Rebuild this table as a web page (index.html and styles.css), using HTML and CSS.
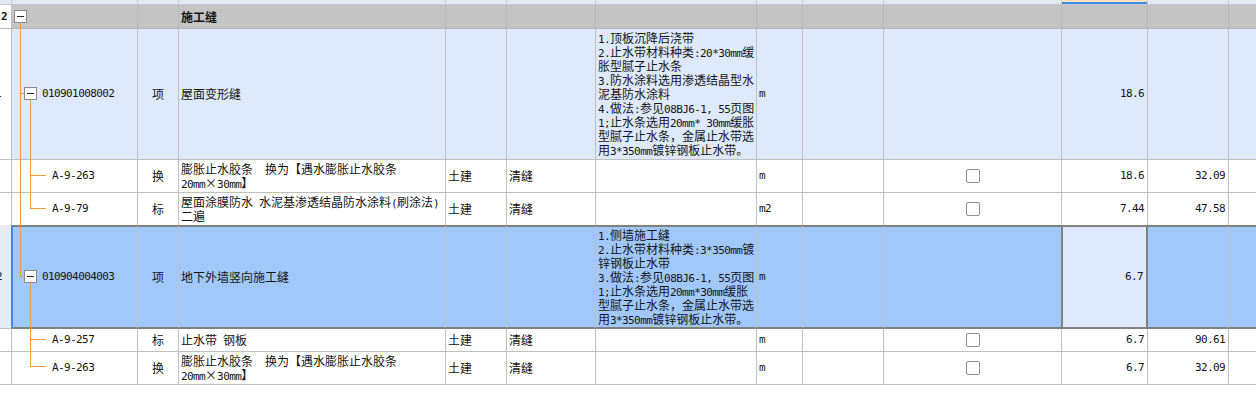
FILE: index.html
```html
<!DOCTYPE html>
<html lang="zh-CN">
<head>
<meta charset="utf-8">
<title>清单</title>
<link rel="stylesheet" href="styles.css">
</head>
<body>
<div class="sheet">
  <div class="row hdr">
    <div class="c c0"></div><div class="c"></div><div class="c"></div><div class="c"></div><div class="c"></div><div class="c"></div><div class="c"></div><div class="c"></div><div class="c"></div><div class="c"></div><div class="c cur"></div><div class="c"></div><div class="c"></div>
  </div>

  <div class="row grp">
    <div class="c c0"><b class="n bold">2</b></div>
    <div class="c"></div>
    <div class="c"></div>
    <div class="c name"><b>施工缝</b></div>
    <div class="c"></div><div class="c"></div><div class="c"></div><div class="c"></div><div class="c"></div><div class="c"></div><div class="c"></div><div class="c"></div><div class="c"></div>
  </div>

  <div class="row item r1">
    <div class="c c0"><span class="n clip">1</span></div>
    <div class="c code item-code"><span class="n">010901008002</span></div>
    <div class="c mid">项</div>
    <div class="c name">屋面变形缝</div>
    <div class="c"></div>
    <div class="c"></div>
    <div class="c desc"><div>
      <div><span class="n">1.</span>顶板沉降后浇带</div>
      <div><span class="n">2.</span>止水带材料种类<span class="n">:20*30mm</span>缓</div>
      <div>胀型腻子止水条</div>
      <div><span class="n">3.</span>防水涂料选用渗透结晶型水</div>
      <div>泥基防水涂料</div>
      <div><span class="n">4.</span>做法<span class="n">:</span>参见<span class="n">08BJ6-1, 55</span>页图</div>
      <div><span class="n">1;</span>止水条选用<span class="n">20mm* 30mm</span>缓胀</div>
      <div>型腻子止水条，金属止水带选</div>
      <div>用<span class="n">3*350mm</span>镀锌钢板止水带。</div>
    </div></div>
    <div class="c unit"><span class="n">m</span></div>
    <div class="c"></div>
    <div class="c"></div>
    <div class="c num"><span class="n">18.6</span></div>
    <div class="c"></div>
    <div class="c"></div>
  </div>

  <div class="row sub r2">
    <div class="c c0"></div>
    <div class="c code sub-code"><span class="n">A-9-263</span></div>
    <div class="c mid">换</div>
    <div class="c name"><div>膨胀止水胶条　换为【遇水膨胀止水胶条<br><span class="n">20mm</span>×<span class="n">30mm</span>】</div></div>
    <div class="c">土建</div>
    <div class="c">清缝</div>
    <div class="c desc"></div>
    <div class="c unit"><span class="n">m</span></div>
    <div class="c"></div>
    <div class="c chk"><span class="box"></span></div>
    <div class="c num"><span class="n">18.6</span></div>
    <div class="c num"><span class="n">32.09</span></div>
    <div class="c"></div>
  </div>

  <div class="row sub r3">
    <div class="c c0"></div>
    <div class="c code sub-code"><span class="n">A-9-79</span></div>
    <div class="c mid">标</div>
    <div class="c name"><div>屋面涂膜防水<span class="n">&nbsp;</span>水泥基渗透结晶防水涂料<span class="n">(</span>刷涂法<span class="n">)</span><br>二遍</div></div>
    <div class="c">土建</div>
    <div class="c">清缝</div>
    <div class="c desc"></div>
    <div class="c unit"><span class="n">m2</span></div>
    <div class="c"></div>
    <div class="c chk"><span class="box"></span></div>
    <div class="c num"><span class="n">7.44</span></div>
    <div class="c num"><span class="n">47.58</span></div>
    <div class="c"></div>
  </div>

  <div class="row sel">
    <div class="c c0"><span class="n clip2">2</span></div>
    <div class="c code item-code first"><span class="n">010904004003</span></div>
    <div class="c mid">项</div>
    <div class="c name">地下外墙竖向施工缝</div>
    <div class="c"></div>
    <div class="c"></div>
    <div class="c desc"><div>
      <div><span class="n">1.</span>侧墙施工缝</div>
      <div><span class="n">2.</span>止水带材料种类<span class="n">:3*350mm</span>镀</div>
      <div>锌钢板止水带</div>
      <div><span class="n">3.</span>做法<span class="n">:</span>参见<span class="n">08BJ6-1, 55</span>页图</div>
      <div><span class="n">1;</span>止水条选用<span class="n">20mm*30mm</span>缓胀</div>
      <div>型腻子止水条，金属止水带选</div>
      <div>用<span class="n">3*350mm</span>镀锌钢板止水带。</div>
    </div></div>
    <div class="c unit"><span class="n">m</span></div>
    <div class="c"></div>
    <div class="c before-cur"></div>
    <div class="c num cur-cell"><span class="n">6.7</span></div>
    <div class="c"></div>
    <div class="c"></div>
  </div>

  <div class="row sub r5">
    <div class="c c0"></div>
    <div class="c code sub-code"><span class="n">A-9-257</span></div>
    <div class="c mid">标</div>
    <div class="c name"><div>止水带<span class="n">&nbsp;</span>钢板</div></div>
    <div class="c">土建</div>
    <div class="c">清缝</div>
    <div class="c desc"></div>
    <div class="c unit"><span class="n">m</span></div>
    <div class="c"></div>
    <div class="c chk"><span class="box"></span></div>
    <div class="c num"><span class="n">6.7</span></div>
    <div class="c num"><span class="n">90.61</span></div>
    <div class="c"></div>
  </div>

  <div class="row sub r6">
    <div class="c c0"></div>
    <div class="c code sub-code"><span class="n">A-9-263</span></div>
    <div class="c mid">换</div>
    <div class="c name"><div>膨胀止水胶条　换为【遇水膨胀止水胶条<br><span class="n">20mm</span>×<span class="n">30mm</span>】</div></div>
    <div class="c">土建</div>
    <div class="c">清缝</div>
    <div class="c desc"></div>
    <div class="c unit"><span class="n">m</span></div>
    <div class="c"></div>
    <div class="c chk"><span class="box"></span></div>
    <div class="c num"><span class="n">6.7</span></div>
    <div class="c num"><span class="n">32.09</span></div>
    <div class="c"></div>
  </div>

  <svg class="tree" width="60" height="399" viewBox="0 0 60 399">
    <g stroke="#f59a3c" stroke-width="1" fill="none">
      <line x1="20.5" y1="23" x2="20.5" y2="276.5"/>
      <line x1="20" y1="93.5" x2="24" y2="93.5"/>
      <line x1="20" y1="276.5" x2="24" y2="276.5"/>
      <line x1="30.5" y1="100" x2="30.5" y2="208.5"/>
      <line x1="30" y1="175.5" x2="46" y2="175.5"/>
      <line x1="30" y1="208.5" x2="46" y2="208.5"/>
      <line x1="30.5" y1="283" x2="30.5" y2="366.5"/>
      <line x1="30" y1="339.5" x2="46" y2="339.5"/>
      <line x1="30" y1="366.5" x2="46" y2="366.5"/>
    </g>
    <g fill="#fff" stroke="#8a8a8a" stroke-width="1">
      <rect x="14.5" y="10.5" width="12" height="12"/>
      <rect x="24.5" y="87.5" width="12" height="12"/>
      <rect x="24.5" y="270.5" width="12" height="12"/>
    </g>
    <g stroke="#2a2a2a" stroke-width="1">
      <line x1="17" y1="16.5" x2="24" y2="16.5"/>
      <line x1="27" y1="93.5" x2="34" y2="93.5"/>
      <line x1="27" y1="276.5" x2="34" y2="276.5"/>
    </g>
  </svg>
</div>
</body>
</html>
```

FILE: styles.css
```css
html, body {
  margin: 0;
  padding: 0;
  background: #fff;
  overflow: hidden;
}

body {
  font-family: "Noto Sans CJK SC", "Noto Sans", sans-serif;
  font-size: 12px;
  color: #141414;
}

.sheet {
  position: relative;
  width: 1256px;
  height: 399px;
}

.row {
  display: grid;
  grid-template-columns: 12px 126px 41px 267px 61px 89px 161px 46px 81px 178px 86px 81px 40px;
  box-sizing: border-box;
  border-bottom: 1px solid #c0c0c0;
}

.c {
  box-sizing: border-box;
  border-right: 1px solid #c0c0c0;
  display: flex;
  align-items: center;
  overflow: hidden;
  white-space: nowrap;
  line-height: 14px;
  padding: 0 2px;
  min-width: 0;
}

.n {
  font-family: "DejaVu Sans Mono", "Liberation Mono", monospace;
  font-size: 11px;
  letter-spacing: -0.6px;
  line-height: 10px;
}

.bold {
  font-weight: bold;
}

/* header strip */
.hdr {
  height: 5px;
  background: #e3e9f1;
  border-bottom: 1px solid #c3c8d0;
}
.hdr .c {
  border-right-color: #c9ced6;
}
.hdr .cur {
  background: #ffe1b3;
  box-shadow: inset 0 -2px 0 #3c8ee8;
}

/* group row */
.grp {
  height: 24px;
  background: #c4c4c4;
  border-bottom: 1px solid #b4b4b4;
}
.grp .c {
  border-right-color: #bababa;
}
.grp .c0 {
  background: #fff;
  border-right-color: #c0c0c0;
  padding: 0 0 0 1px;
}
.grp .name b {
  font-weight: bold;
}

/* item (parent) row */
.item {
  background: #dee9fc;
}
.r1 {
  height: 131px;
}
.item .c0 {
  background: #fff;
}

.sub {
  background: #fff;
}
.r2 { height: 33px; }
.r3 { height: 32px; border-bottom: none; }
.r5 { height: 23px; }
.r6 { height: 33px; }

.c0 {
  padding: 0;
}
.clip {
  margin-left: -5px;
}
.clip2 {
  margin-left: -4px;
}

.code.item-code {
  padding-left: 30px;
}
.code.sub-code {
  padding-left: 40px;
}

.mid {
  justify-content: center;
  padding: 0;
}

.name {
  padding-left: 2px;
}

.desc {
  padding: 0 0 0 2px;
}

.unit {
  padding-left: 2px;
}

.num {
  justify-content: flex-end;
  padding-right: 3px;
}

.chk {
  justify-content: center;
  padding: 0;
}
.box {
  display: block;
  width: 14px;
  height: 14px;
  box-sizing: border-box;
  border: 1px solid #8e8e8e;
  border-radius: 2px;
  background: #fff;
}

/* selected row */
.sel {
  height: 104px;
  background: #a1c8fb;
  border-bottom: none;
}
.sel .c {
  border-top: 2px solid #808080;
  border-bottom: 2px solid #808080;
}
.sel .c0 {
  background: #e6ebf4;
  border-top: none;
  border-bottom: 1px solid #c0c0c0;
  border-right: 1px solid #3b8beb;
}
.sel .first {
  box-shadow: inset 1px 0 0 #3b8beb;
}
.sel .before-cur {
  border-right-color: #808080;
}
.sel .cur-cell {
  background: #dee9fc;
  border-right: 2px solid #808080;
  box-shadow: inset 1px 0 0 #808080;
}

.tree {
  position: absolute;
  left: 0;
  top: 0;
  pointer-events: none;
}
```
